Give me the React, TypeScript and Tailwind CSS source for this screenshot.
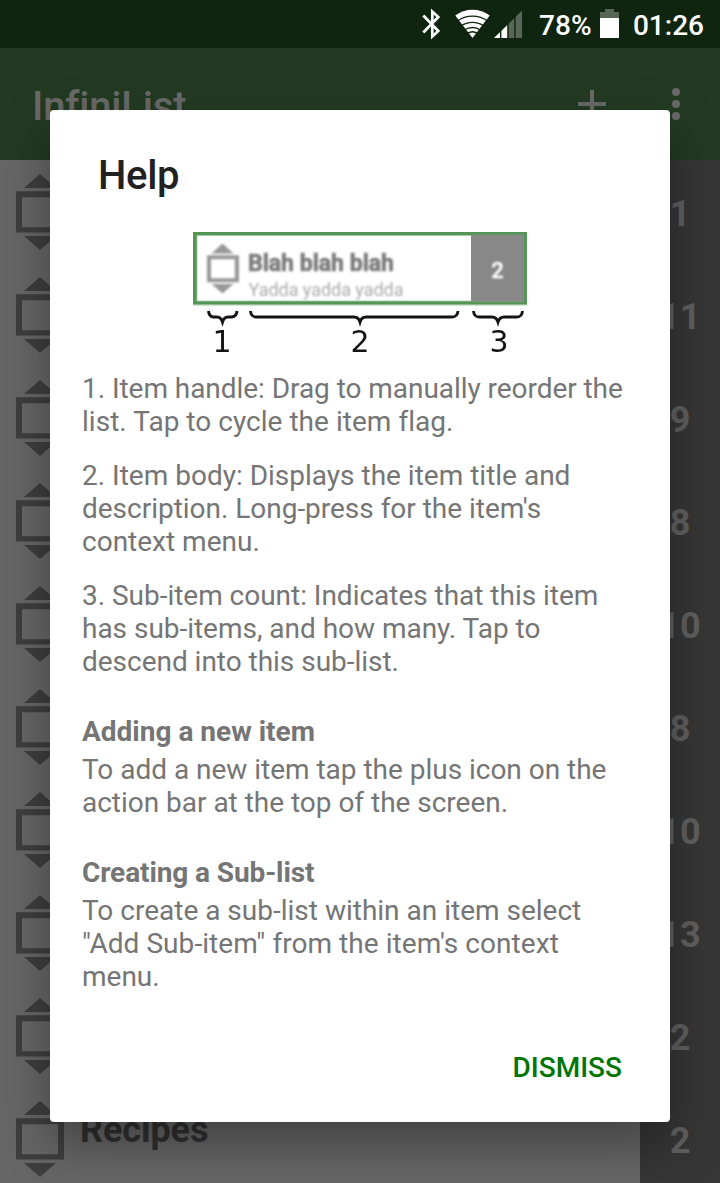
import React from "react";

const counts = ["1", "11", "9", "8", "10", "8", "10", "13", "2", "2"];

function Handle() {
  return (
    <svg width="48" height="76" viewBox="0 0 48 76" className="shrink-0" fill="#3e3e3e">
      <path d="M24 0 40 14H8Z" />
      <path fillRule="evenodd" d="M0 17.3H48V58.5H0ZM6 23.2V53.2H42V23.2Z" />
      <path d="M8 62H40L24 76Z" />
    </svg>
  );
}

function StatusBar() {
  return (
    <header className="flex h-12 shrink-0 bg-[#0f250f] pr-4 text-[28px] leading-[51px] font-medium text-white">
      <svg width="209" height="48" viewBox="416 0 209 48" className="ml-auto shrink-0 overflow-visible">
        <path
          d="M423.300 15.500 438.300 31 432.300 36.500V11.500L438.300 17 423.300 32.500"
          fill="none"
          stroke="#fff"
          strokeWidth="2.700"
        />
        <path d="M472.500 38 455.300 15.500A29 29 0 0 1 489.700 15.500Z" fill="#fff" />
        <g fill="none" stroke="#0f250f" strokeWidth="1.300">
          <path d="M457 21.200A26 26 0 0 1 488 21.200" />
          <path d="M461 26A20 20 0 0 1 484 26" />
          <path d="M464.500 30A14 14 0 0 1 480.500 30" />
          <path d="M467.500 33.400A9 9 0 0 1 477.500 33.400" />
        </g>
        <path d="M494 38 522 10.500V38Z" fill="#576657" />
        <path d="M494 38 507.500 25V38Z" fill="#fff" />
        <path d="M500.700 10V38M508 10V38M515 10V38" stroke="#0f250f" strokeWidth="1.400" />
        <text x="539" y="35" fill="#fff" fontSize="28" textLength="52.5">78%</text>
        <path d="M600 12H605V9H614V12H619V18H600Z" fill="#576657" />
        <path d="M600 18H619V38H600Z" fill="#fff" />
      </svg>
      <span className="ml-2">01:26</span>
    </header>
  );
}

function AppBar() {
  return (
    <div className="flex h-28 shrink-0 items-center bg-[#223a22] pl-8 text-[#696969]">
      <h1 className="pt-1.5 text-[40px] leading-[46px] font-medium tracking-[-0.18px]">InfiniList</h1>
      <svg width="28" height="28" viewBox="0 0 28 28" className="ml-auto" fill="none" stroke="currentColor" strokeWidth="4">
        <path d="M0 14H28M14 0V28" />
      </svg>
      <svg width="8" height="32" viewBox="0 0 8 32" className="mr-10 ml-[66px]" fill="currentColor">
        <circle cx="4" cy="4" r="4" />
        <circle cx="4" cy="16" r="4" />
        <circle cx="4" cy="28" r="4" />
      </svg>
    </div>
  );
}

function Row({ count, title }: { count: string; title: string }) {
  return (
    <div className="flex h-[103px] shrink-0">
      <div className="flex flex-1 items-start pt-[14px] pl-4">
        <Handle />
        <span className="pt-2 pl-4 text-[36px] leading-[42px] font-bold tracking-[-0.1px] text-[#303030]">{title}</span>
      </div>
      <div className="flex w-20 justify-center bg-[#363636] pt-[33px] text-[36px] leading-[43px] font-bold text-[#606060]">
        {count}
      </div>
    </div>
  );
}

function Diagram() {
  return (
    <svg width="334" height="120" viewBox="193 232 334 120" className="mx-auto block overflow-visible">
      <defs>
        <filter id="soft" x="-5%" y="-5%" width="110%" height="110%" colorInterpolationFilters="sRGB">
          <feGaussianBlur stdDeviation="0.85" />
        </filter>
        <filter id="softer" x="-5%" y="-5%" width="110%" height="115%" colorInterpolationFilters="sRGB">
          <feGaussianBlur stdDeviation="0.65" />
        </filter>
      </defs>
      <rect x="193" y="232" width="334" height="73" fill="#549655" />
      <rect x="193" y="304.500" width="334" height="1.200" fill="#c5dcc5" />
      <rect x="197" y="235.500" width="326.500" height="65.500" fill="#fff" stroke="#a5cba5" strokeWidth="0.800" />
      <rect x="471" y="234.500" width="53" height="67" fill="#888" />
      <g filter="url(#soft)">
        <g fill="#989898">
          <path d="M222.500 243.500 233.500 253.500H211.500Z" />
          <path fillRule="evenodd" d="M207 255.300H239V282.200H207ZM211 259.300V278.300H234.800V259.300Z" />
          <path d="M211.500 284H233.500L222.500 293.500Z" />
        </g>
        <text x="248" y="271" fontSize="23.500" fontWeight="700" fill="#7c7c7c" stroke="#7c7c7c" strokeWidth="0.700" textLength="146" lengthAdjust="spacingAndGlyphs">
          Blah blah blah
        </text>
        <text x="248.500" y="296" fontSize="18" fill="#acacac" textLength="155">
          Yadda yadda yadda
        </text>
        <text x="497.500" y="277.500" fontSize="22" fontWeight="500" fill="#fff" stroke="#fff" strokeWidth="0.400" textAnchor="middle">
          2
        </text>
      </g>
      <g filter="url(#softer)">
        <g fill="none" stroke="#141414" strokeWidth="2.900">
          <path d="M208.500 311Q209 316.500 213 317H217Q221 317 222.500 322Q224 317 228 317H232Q236.500 316.500 237 311" />
          <path d="M250.500 311Q251 317 256 317H354Q358.500 317 360 322Q361.500 317 366 317H452Q457.500 317 458 311" />
          <path d="M473.500 311Q474 317 479 317H492Q496.500 317 498 322Q499.500 317 504 317H517Q522 317 522.500 311" />
        </g>
        <g className="font-['DejaVu_Sans',sans-serif]" fontSize="30" fill="#141414" textAnchor="middle">
          <text x="222" y="352">1</text>
          <text x="360" y="352">2</text>
          <text x="499" y="352">3</text>
        </g>
      </g>
    </svg>
  );
}

function Dialog() {
  return (
    <section
      role="dialog"
      className="absolute top-[110px] left-[50px] flex h-[1012px] w-[620px] flex-col rounded bg-white pt-[42px] text-[28px] leading-[33px] text-[#757575] shadow-[0_22px_50px_rgba(0,0,0,0.36)]"
    >
      <h2 className="h-[47px] pl-12 text-[40px] leading-[48px] font-medium tracking-[-0.3px] text-[#212121]">Help</h2>
      <div className="mt-[33px]">
        <Diagram />
      </div>
      <div className="mt-5 px-8 whitespace-nowrap">
        <p><span className="tracking-[-0.05px]">1. Item handle: Drag to manually reorder the</span><br /><span className="tracking-[0.03px]">list. Tap to cycle the item flag.</span></p>
        <p className="mt-[21px]">2. Item body: Displays the item title and<br /><span className="tracking-[-0.02px]">description. Long-press for the item's</span><br />context menu.</p>
        <p className="mt-[21px] tracking-[-0.025px]">3. Sub-item count: Indicates that this item<br />has sub-items, and how many. Tap to<br />descend into this sub-list.</p>
        <h3 className="mt-[37px] font-bold">Adding a new item</h3>
        <p className="mt-[5px] tracking-[-0.02px]">To add a new item tap the plus icon on the<br />action bar at the top of the screen.</p>
        <h3 className="mt-[37px] font-bold tracking-[-0.1px]">Creating a Sub-list</h3>
        <p className="mt-[5px]">To create a sub-list within an item select<br /><span className="tracking-[0.06px]">"Add Sub-item" from the item's context</span><br />menu.</p>
      </div>
      <button className="mt-auto mr-12 mb-[38px] self-end font-medium text-[#007500]">DISMISS</button>
    </section>
  );
}

export default function App() {
  return (
    <main className="relative flex h-[1183px] w-[720px] flex-col overflow-hidden bg-[#666] font-['Roboto',sans-serif]">
      <StatusBar />
      <AppBar />
      {counts.map((count, i) => (
        <Row key={i} count={count} title={i === 9 ? "Recipes" : ""} />
      ))}
      <Dialog />
    </main>
  );
}
